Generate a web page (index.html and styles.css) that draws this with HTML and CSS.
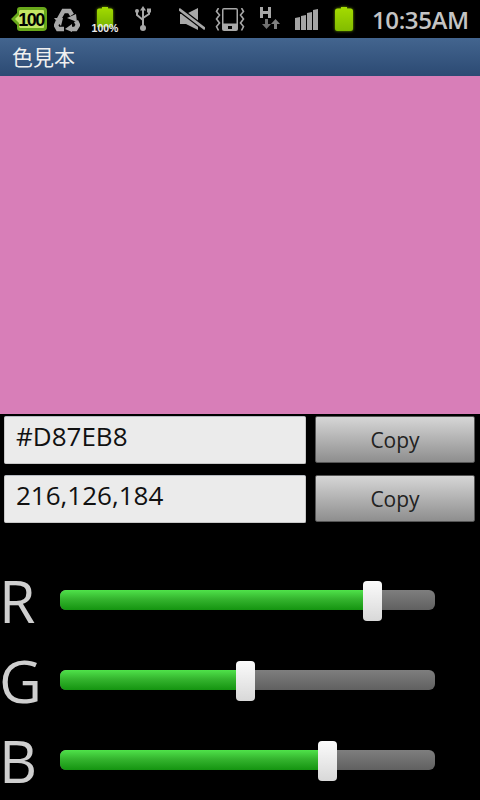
FILE: index.html
```html
<!DOCTYPE html>
<html lang="ja">
<head>
<meta charset="utf-8">
<title>色見本</title>
<link rel="stylesheet" href="styles.css">
</head>
<body>
<div class="app">
  <header class="status">
    <svg class="ic ic-badge" viewBox="0 0 36 24"><path d="M9 0h23a4 4 0 0 1 4 4v16a4 4 0 0 1-4 4H9a3 3 0 0 1-3-3v-3L0 12l6-6V3a3 3 0 0 1 3-3z" fill="#69a81a"/><path d="M9 3h23a1 1 0 0 1 1 1v16a1 1 0 0 1-1 1H9l-1-1v-4l-4-4 4-4V4z" fill="#c4e765"/><text x="20" y="18.500" class="badge-text" text-anchor="middle">100</text></svg>
    <svg class="ic ic-recycle" viewBox="0 0 26 24"><g fill="none" stroke="#a8a8a8" stroke-width="4.500"><path d="M5 11l4.500-8h6l2.500 4"/><path d="M22 13l2 4-2.500 4H17"/><path d="M10 21H4l-2-3.500L4 13"/></g><g fill="#a8a8a8"><path d="M13 10l9-4 1 8z"/><path d="M11 21l7-5v8z"/><path d="M0 10l9 0-2 8z"/></g></svg>
    <div class="mini-batt">
      <svg class="ic-mb" viewBox="0 0 16 20"><defs><linearGradient id="mb" x1="0" y1="0" x2="0" y2="1"><stop offset="0" stop-color="#a4dc00"/><stop offset="1" stop-color="#78b400"/></linearGradient></defs><path d="M5 0h6v1.500h3a2 2 0 0 1 2 2V20H0V3.500a2 2 0 0 1 2-2h3z" fill="url(#mb)"/></svg>
      <span class="mini-label">100%</span>
    </div>
    <svg class="ic ic-usb" viewBox="0 0 16 25" fill="none" stroke="#a8a8a8" stroke-width="2"><path d="M8 3v18"/><path d="M2 6v3l6 5M14 5v3l-6 4"/><path d="M8 0l3 4.500H5z" fill="#a8a8a8" stroke="none"/><circle cx="2" cy="5" r="2" fill="#a8a8a8" stroke="none"/><rect x="12" y="2.500" width="4" height="4" fill="#a8a8a8" stroke="none"/><circle cx="8" cy="22" r="3" fill="#a8a8a8" stroke="none"/></svg>
    <svg class="ic ic-mute" viewBox="0 0 26 22"><path d="M1 6h6l12-6v22L7 16H1z" fill="#a8a8a8"/><path d="M0 1l26 20" stroke="#000" stroke-width="5"/><path d="M0 1l26 20" stroke="#a8a8a8" stroke-width="2.600"/></svg>
    <svg class="ic ic-vib" viewBox="0 0 30 23"><rect x="7" y="0" width="16" height="23" rx="2" fill="#a8a8a8"/><rect x="8.500" y="1.500" width="13" height="14" fill="#000"/><rect x="13" y="18" width="4" height="3" fill="#000"/><path d="M3.500 0l-2 3.500 3 3.500-3 4 3 4-3 3.500 2 4M26.500 0l2 3.500-3 3.500 3 4-3 4 3 3.500-2 4" fill="none" stroke="#a8a8a8" stroke-width="1.600"/></svg>
    <svg class="ic ic-h" viewBox="0 0 20 22"><path d="M0 0h3v4h5V0h3v11H8V7H3v4H0z" fill="#a8a8a8"/><path d="M5 12h3v5h3l-4.500 5L2 17h3z" fill="#707070"/><path d="M15.500 12L20 17h-3v5h-3v-5h-3z" fill="#808080"/></svg>
    <svg class="ic ic-signal" viewBox="0 0 23 21" fill="#a4a4a4"><path d="M0 9l5-1v13H0z"/><path d="M6 7l5-1v15H6z"/><path d="M12 4l5-1v18h-5z"/><path d="M18 1l5-1v21h-5z"/></svg>
    <svg class="ic ic-batt" viewBox="0 0 18 24"><defs><linearGradient id="bt" x1="0" y1="0" x2="0" y2="1"><stop offset="0" stop-color="#a4dc00"/><stop offset="1" stop-color="#82bc00"/></linearGradient></defs><path d="M6 0h6v1.500h3.500A2.500 2.500 0 0 1 18 4v17.500a2.500 2.500 0 0 1-2.500 2.500h-13A2.500 2.500 0 0 1 0 21.500V4a2.500 2.500 0 0 1 2.500-2.500H6z" fill="url(#bt)"/></svg>
    <span class="clock">10:35AM</span>
  </header>
  <div class="titlebar">色見本</div>
  <div class="swatch"></div>
  <div class="fields">
    <div class="field-row">
      <div class="field">#D87EB8</div>
      <button class="copy">Copy</button>
    </div>
    <div class="field-row">
      <div class="field">216,126,184</div>
      <button class="copy">Copy</button>
    </div>
  </div>
  <div class="sliders">
    <div class="slider-row">
      <span class="channel">R</span>
      <div class="track"><div class="fill" style="width:312px"></div><div class="thumb" style="left:303px"></div></div>
    </div>
    <div class="slider-row">
      <span class="channel">G</span>
      <div class="track"><div class="fill" style="width:185px"></div><div class="thumb" style="left:176px"></div></div>
    </div>
    <div class="slider-row">
      <span class="channel">B</span>
      <div class="track"><div class="fill" style="width:267px"></div><div class="thumb" style="left:258px"></div></div>
    </div>
  </div>
</div>
</body>
</html>
```
FILE: styles.css
```css
* { box-sizing: border-box; }
html, body { margin: 0; padding: 0; background: #000; }
.app {
  width: 480px;
  height: 800px;
  overflow: hidden;
  display: flex;
  flex-direction: column;
  background: #000;
  font-family: "Open Sans", "Noto Sans", sans-serif;
}
.status {
  height: 38px;
  flex: none;
  display: flex;
  align-items: flex-start;
  background: #000;
}
.ic { display: block; flex: none; }
.ic-badge { width: 36px; height: 24px; margin: 7px 0 0 11px; }
.badge-text { font: bold 18px "Liberation Sans", sans-serif; letter-spacing: -1.500px; fill: #000; }
.ic-recycle { width: 26px; height: 24px; margin: 8px 0 0 7px; }
.mini-batt { width: 26px; height: 26px; margin: 7px 0 0 12px; position: relative; flex: none; }
.ic-mb { display: block; width: 16px; height: 20px; margin-left: 5px; filter: drop-shadow(0 0 1.500px #6f9a00); }
.mini-label {
  position: absolute;
  left: -2px;
  top: 15px;
  width: 30px;
  text-align: center;
  font: bold 10.500px/12px "Liberation Sans", sans-serif;
  color: #ececec;
}
.ic-usb { width: 16px; height: 25px; margin: 6px 0 0 17px; }
.ic-mute { width: 26px; height: 22px; margin: 8px 0 0 28px; }
.ic-vib { width: 30px; height: 23px; margin: 8px 0 0 10px; }
.ic-h { width: 20px; height: 22px; margin: 7px 0 0 15px; }
.ic-signal { width: 23px; height: 21px; margin: 9px 0 0 15px; }
.ic-batt { width: 18px; height: 24px; margin: 7px 0 0 17px; filter: drop-shadow(0 0 1.500px #6f9a00); }
.clock {
  margin: 3px 0 0 19px;
  font-size: 24px;
  line-height: 33px;
  font-weight: 600;
  color: #c4c4c4;
  white-space: nowrap;
  letter-spacing: -0.400px;
}
.titlebar {
  height: 38px;
  flex: none;
  padding-left: 12px;
  font: 21px/37px "Noto Sans CJK JP", sans-serif;
  color: #f0f0f0;
  background: linear-gradient(#43658f, #2c4a73);
}
.swatch { height: 338px; flex: none; background: #d87eb8; }
.fields {
  height: 146px;
  flex: none;
  padding: 2px 5px 0 4px;
  display: flex;
  flex-direction: column;
  gap: 11px;
}
.field-row {
  height: 48px;
  display: flex;
  gap: 9px;
  align-items: flex-start;
}
.field {
  width: 302px;
  height: 48px;
  padding: 1px 0 0 11px;
  background: #ebebeb;
  border-radius: 2px;
  border: 1px solid #c8c8c8;
  border-top-color: #b8bcc4;
  font-size: 26px;
  line-height: 36px;
  color: #111;
}
.copy {
  width: 160px;
  height: 47px;
  padding: 0;
  border: 1px solid #555;
  border-radius: 2px;
  background: linear-gradient(#d6d6d6, #8e8e8e);
  font: 21px/30px "Open Sans", "Noto Sans", sans-serif;
  color: #222;
}
.sliders { display: flex; flex-direction: column; }
.slider-row {
  height: 80px;
  display: flex;
  align-items: center;
}
.channel {
  width: 60px;
  padding-left: 0;
  margin-left: -1px;
  margin-right: 1px;
  font-size: 59px;
  line-height: 80px;
  color: #cfcfcf;
}
.track {
  width: 375px;
  height: 20px;
  position: relative;
  border-radius: 6px;
  background: linear-gradient(#7e7e7e, #606060);
}
.fill {
  height: 20px;
  border-radius: 6px 0 0 6px;
  background: linear-gradient(#4fe24a 0%, #35b52f 45%, #149410 100%);
}
.thumb {
  position: absolute;
  top: -9px;
  width: 19px;
  height: 40px;
  border-radius: 4px;
  background: linear-gradient(#fbfbfb, #d8d8d8);
}
```
